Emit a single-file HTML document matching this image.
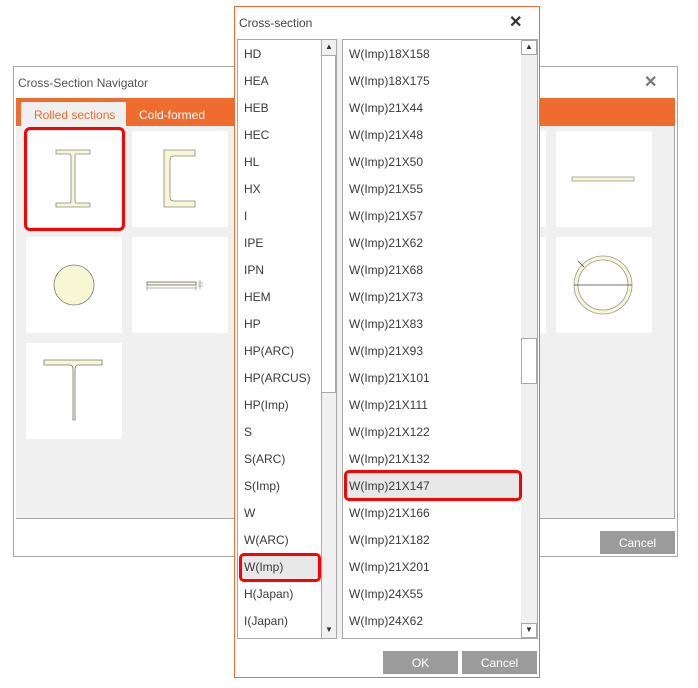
<!DOCTYPE html>
<html><head><meta charset="utf-8"><style>
*{margin:0;padding:0;box-sizing:border-box}
body{width:698px;height:688px;background:#fff;position:relative;overflow:hidden;font-family:"Liberation Sans",sans-serif;font-size:12px;color:#333}
.abs{position:absolute}
.tile{position:absolute;width:96px;height:96px;background:#fff}
.item{position:absolute;left:6px;height:27px;line-height:29px;white-space:nowrap;color:#3a3a3a}
.btn{position:absolute;background:#9b9b9b;color:#fff;text-align:center;line-height:24px;height:23px;font-size:12px}
</style></head><body>
<!-- navigator -->
<div class="abs" style="left:13px;top:66px;width:665px;height:491px;border:1px solid #a8a8a8;background:#fff"></div>
<div class="abs" style="left:18px;top:76px;font-size:12px;color:#555">Cross-Section Navigator</div>
<div class="abs" style="left:644px;top:72px;font-size:16px;color:#777;font-weight:bold">✕</div>
<div class="abs" style="left:16px;top:98px;width:659px;height:28px;background:#f06b2e"></div>
<div class="abs" style="left:21px;top:102px;width:105px;height:24px;background:#f0f0f0;color:#f06b2e;padding:6px 0 0 13px">Rolled sections</div>
<div class="abs" style="left:139px;top:108px;color:#fff">Cold-formed</div>
<div class="abs" style="left:16px;top:126px;width:659px;height:393px;background:#f0f0f0;border-bottom:1px solid #a8a8a8;border-right:1px solid #a8a8a8"></div>
<div class="tile" style="left:26px;top:131px"></div>
<div class="abs" style="left:24px;top:127px;width:101px;height:104px;border:3px solid #f00;border-radius:6px"></div>
<svg class="abs" style="left:26px;top:131px" width="96" height="96"><path d="M30 19H64V23H50Q49 23 49 26V69Q49 72 50 72H64V76H30V72H44Q45 72 45 69V26Q45 23 44 23H30Z" fill="#f7f7d4" stroke="#888" stroke-width="0.8"/></svg>
<div class="tile" style="left:132px;top:131px"></div>
<svg class="abs" style="left:132px;top:131px" width="96" height="96"><path d="M32 19H63V25H42Q38 25 38 29V66Q38 70 42 70H63V76H32Z" fill="#f7f7d4" stroke="#888" stroke-width="0.8"/></svg>
<div class="tile" style="left:26px;top:237px"></div>
<svg class="abs" style="left:26px;top:237px" width="96" height="96"><circle cx="48" cy="48" r="20" fill="#f7f7d4" stroke="#777" stroke-width="0.8"/></svg>
<div class="tile" style="left:132px;top:237px"></div>
<svg class="abs" style="left:132px;top:237px" width="96" height="96"><rect x="15" y="45" width="49" height="3" fill="#f7f7d4" stroke="#666" stroke-width="0.8"/><path d="M15 51H64M15 49V53M64 49V53M68 43V52M66 46H71M66 49H71" stroke="#999" stroke-width="0.8" fill="none"/></svg>
<div class="tile" style="left:26px;top:343px"></div>
<svg class="abs" style="left:26px;top:343px" width="96" height="96"><path d="M18 17H76V22H52Q49 22 49 27V77H47V27Q47 22 44 22H18Z" fill="#f7f7d4" stroke="#777" stroke-width="0.8"/></svg>
<div class="tile" style="left:530px;top:131px;width:16px"></div>
<div class="tile" style="left:530px;top:237px;width:16px"></div>
<div class="tile" style="left:556px;top:131px"></div>
<svg class="abs" style="left:556px;top:131px" width="96" height="96"><rect x="16" y="46" width="62" height="4" fill="#f7f7d4" stroke="#999" stroke-width="0.8"/></svg>
<div class="tile" style="left:556px;top:237px"></div>
<svg class="abs" style="left:556px;top:237px" width="96" height="96"><circle cx="47" cy="48" r="29" fill="#f7f7d4" stroke="#999" stroke-width="0.8"/><circle cx="47" cy="48" r="25" fill="#fff" stroke="#999" stroke-width="0.8"/><path d="M18 48H76M22 24L28 30" stroke="#444" stroke-width="0.8"/></svg>
<div class="btn" style="left:600px;top:531px;width:75px">Cancel</div>

<!-- cross-section dialog -->
<div class="abs" style="left:234px;top:6px;width:306px;height:672px;border:1px solid #f06b2e;background:#fff"></div>
<div class="abs" style="left:239px;top:16px;color:#444">Cross-section</div>
<div class="abs" style="left:509px;top:12px;font-size:16px;color:#333;font-weight:bold">✕</div>
<div class="abs" style="left:336px;top:39px;width:6px;height:600px;background:#f0f0f0"></div>
<!-- left list -->
<div class="abs" style="left:237px;top:39px;width:100px;height:600px;border:1px solid #a8a8a8;overflow:hidden">
 <div class="abs" style="left:83px;top:0;width:15px;height:598px;background:#f0f0f0;border-left:1px solid #a8a8a8"></div>
 <div class="abs" style="left:83px;top:15px;width:15px;height:338px;background:#fff;border:1px solid #a8a8a8"></div>
 <div class="abs" style="left:87px;top:2px;font-size:8px;color:#333">▲</div>
 <div class="abs" style="left:87px;top:585px;font-size:8px;color:#333">▼</div>
 <div class="item" style="top:0">HD</div><div class="item" style="top:27px">HEA</div><div class="item" style="top:54px">HEB</div><div class="item" style="top:81px">HEC</div><div class="item" style="top:108px">HL</div><div class="item" style="top:135px">HX</div><div class="item" style="top:162px">I</div><div class="item" style="top:189px">IPE</div><div class="item" style="top:216px">IPN</div><div class="item" style="top:243px">HEM</div><div class="item" style="top:270px">HP</div><div class="item" style="top:297px">HP(ARC)</div><div class="item" style="top:324px">HP(ARCUS)</div><div class="item" style="top:351px">HP(Imp)</div><div class="item" style="top:378px">S</div><div class="item" style="top:405px">S(ARC)</div><div class="item" style="top:432px">S(Imp)</div><div class="item" style="top:459px">W</div><div class="item" style="top:486px">W(ARC)</div>
 <div class="abs" style="left:1px;top:513px;width:82px;height:29px;background:#e8e8e8;border:3px solid #f00;border-radius:5px"></div>
 <div class="item" style="top:513px">W(Imp)</div><div class="item" style="top:540px">H(Japan)</div><div class="item" style="top:567px">I(Japan)</div>
</div>
<!-- right list -->
<div class="abs" style="left:342px;top:39px;width:196px;height:600px;border:1px solid #a8a8a8;overflow:hidden">
 <div class="abs" style="left:178px;top:0;width:16px;height:598px;background:#f0f0f0"></div>
 <div class="abs" style="left:178px;top:298px;width:16px;height:46px;background:#fff;border:1px solid #a8a8a8"></div>
 <div class="abs" style="left:178px;top:0;width:16px;height:15px;border:1px solid #a8a8a8;background:#fff"></div>
 <div class="abs" style="left:178px;top:583px;width:16px;height:15px;border:1px solid #a8a8a8;background:#fff"></div>
 <div class="abs" style="left:182px;top:2px;font-size:8px;color:#333">▲</div>
 <div class="abs" style="left:182px;top:585px;font-size:8px;color:#333">▼</div>
 <div class="item" style="top:0">W(Imp)18X158</div><div class="item" style="top:27px">W(Imp)18X175</div><div class="item" style="top:54px">W(Imp)21X44</div><div class="item" style="top:81px">W(Imp)21X48</div><div class="item" style="top:108px">W(Imp)21X50</div><div class="item" style="top:135px">W(Imp)21X55</div><div class="item" style="top:162px">W(Imp)21X57</div><div class="item" style="top:189px">W(Imp)21X62</div><div class="item" style="top:216px">W(Imp)21X68</div><div class="item" style="top:243px">W(Imp)21X73</div><div class="item" style="top:270px">W(Imp)21X83</div><div class="item" style="top:297px">W(Imp)21X93</div><div class="item" style="top:324px">W(Imp)21X101</div><div class="item" style="top:351px">W(Imp)21X111</div><div class="item" style="top:378px">W(Imp)21X122</div><div class="item" style="top:405px">W(Imp)21X132</div>
 <div class="abs" style="left:1px;top:430px;width:178px;height:31px;background:#e8e8e8;border:3px solid #f00;border-radius:5px"></div>
 <div class="item" style="top:432px">W(Imp)21X147</div><div class="item" style="top:459px">W(Imp)21X166</div><div class="item" style="top:486px">W(Imp)21X182</div><div class="item" style="top:513px">W(Imp)21X201</div><div class="item" style="top:540px">W(Imp)24X55</div><div class="item" style="top:567px">W(Imp)24X62</div>
</div>
<div class="btn" style="left:383px;top:651px;width:75px">OK</div>
<div class="btn" style="left:462px;top:651px;width:75px">Cancel</div>
</body></html>
